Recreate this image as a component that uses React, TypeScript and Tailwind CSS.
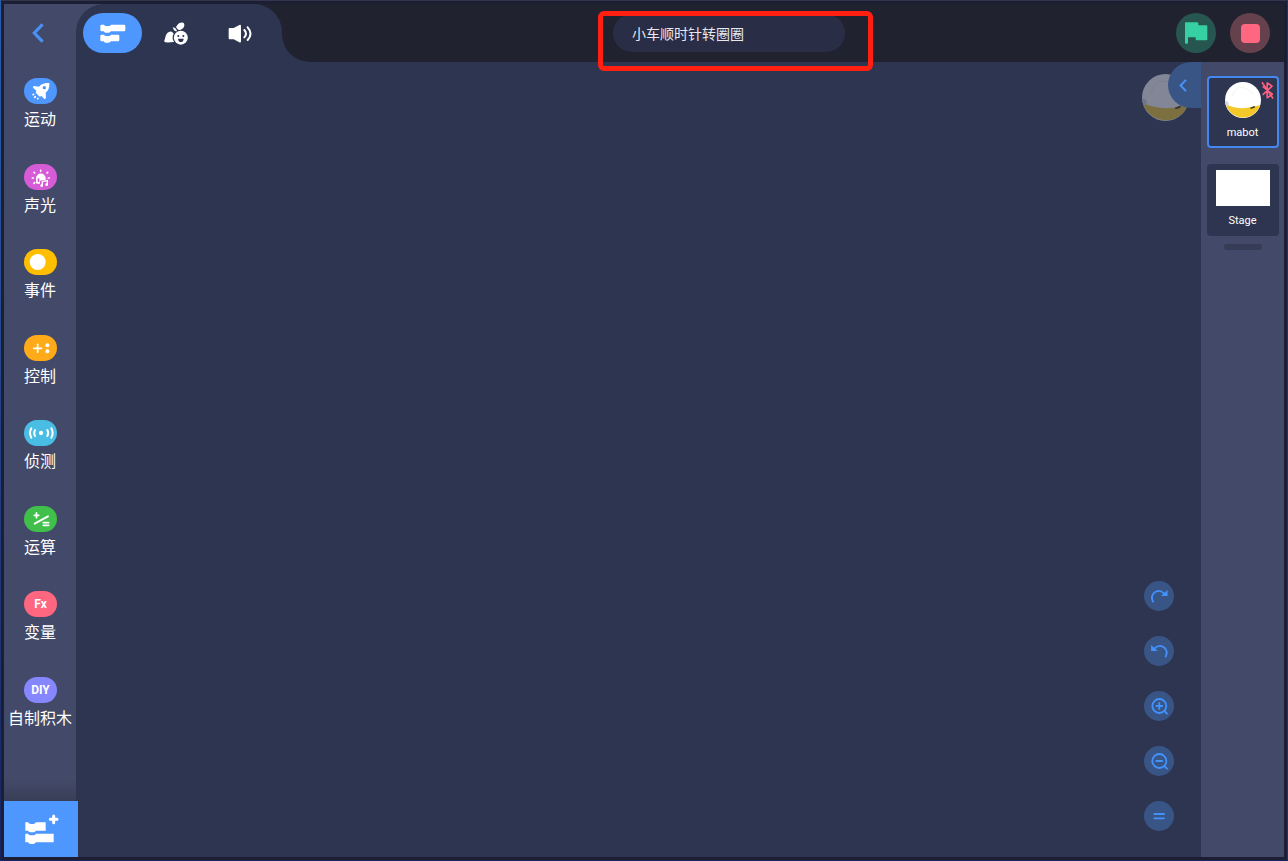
import React, { useState } from 'react';

type IconProps = { className?: string };

const BlocksIcon: React.FC<IconProps> = ({ className }) => (
  <svg viewBox="296 70 84 60" className={className} fill="currentColor">
    <path d="M304 75h7q2 4 6 4h9q4 0 6-4h39q4 0 4 4v12q0 4-4 4h-39q-3 4-7 4h-9q-4 0-6-4h-6q-4 0-4-4V79q0-4 4-4z" />
    <path d="M304 105h7q2 4 6 4h9q4 0 6-4h21q4 0 4 4v12q0 4-4 4h-21q-3 4-7 4h-9q-4 0-6-4h-6q-4 0-4-4v-12q0-4 4-4z" />
  </svg>
);

const CostumeIcon: React.FC<IconProps> = ({ className }) => (
  <svg viewBox="490 62 78 75" className={className}>
    <path d="M539 68q7-3 12-1q4 3 3 9q-1 6-8 11q-6 4-10 1q-6-4-7-8q4-8 10-12z" fill="#fff" />
    <path d="M521 82q7 0 10 10q-8 1-10-10z" fill="#fff" stroke="#fff" strokeWidth="2" strokeLinejoin="round" />
    <path d="M503 98q6-6 13-4q5 2 6 7q-5 7-3 14q1 6 5 9q-12 3-27 2q-5-1-3-6q2-3 3-9q1-8 6-13z" fill="#fff" />
    <circle cx="543.5" cy="112" r="21" fill="#fff" />
    <circle cx="536" cy="107" r="3" fill="#2e3450" />
    <circle cx="551" cy="107" r="3" fill="#2e3450" />
    <path d="M535 115h17q-1 10-8.500 10t-8.500-10z" fill="#2e3450" />
  </svg>
);

const SoundIcon: React.FC<IconProps> = ({ className }) => (
  <svg viewBox="684 70 75 57" className={className}>
    <path d="M689 82h12l17-9q5-2 5 3v46q0 5-5 3l-17-9h-12q-3 0-3-3V85q0-3 3-3z" fill="#fff" />
    <path d="M733 88q10 11 0 22M743 80q17 19 0 38" fill="none" stroke="#fff" strokeWidth="6" strokeLinecap="round" />
  </svg>
);

const AddBlockIcon: React.FC<IconProps> = ({ className }) => (
  <svg viewBox="72 96 108 96" className={className} fill="currentColor">
    <path d="M76 124h8q3 5 8 5h8q5 0 8-5h29v25h-29q-4 5-8 5h-8q-5 0-8-5h-8z" />
    <path d="M76 158h8q3 5 8 5h8q5 0 8-5h53v26h-53q-4 5-8 5h-8q-5 0-8-5h-8z" />
    <path d="M161 105v20M151 115h20" stroke="currentColor" strokeWidth="9" strokeLinecap="round" />
  </svg>
);

const ArrowLeft: React.FC<IconProps> = ({ className }) => (
  <svg viewBox="0 0 12 20" className={className} fill="none" stroke="#4a90f5" strokeWidth="3.200" strokeLinecap="square">
    <path d="M9.500 2.500L2.300 10l7.200 7.500" />
  </svg>
);

const Mabot: React.FC<IconProps> = ({ className }) => (
  <svg viewBox="0 0 46 46" className={className}>
    <circle cx="23" cy="23" r="23" fill="#fff" />
    <path d="M1 28.500Q21 38 45 29.500A23 23 0 0 1 1 28.500z" fill="#f3c929" />
    <path d="M9 18C11 10 17 6 22 7s12 4 15 10" fill="none" stroke="#f2efee" strokeWidth="1" />
    <path d="M0 24q4 0 5 4q-1 3-3 3q-2-3-2-7z" fill="#d6d8e0" />
    <path d="M32 33l6-2.500v2.500l-5 1.500z" fill="#4d3f14" />
  </svg>
);

const BluetoothOff: React.FC<IconProps> = ({ className }) => (
  <svg viewBox="422 241 40 57" className={className} fill="none" stroke="#ff5f7e" strokeWidth="5" strokeLinejoin="round">
    <path d="M427 283L456 256L441 246V292L457 281L427 257" />
    <path d="M425 244L459 294" strokeWidth="5" />
  </svg>
);

const RocketGlyph = () => (
  <>
    <path d="M73 15C58 14 49 18 42 26L27 24Q21 26 25 30L34 38L32 44L44 56L50 54L57 62Q62 65 63 58L62 44C71 36 74 28 73 15z" fill="#fff" />
    <circle cx="58" cy="29" r="5" fill="#4a94fc" />
    <path d="M24 50l2-1M38 62l1-1M29 58l2-2" stroke="#fff" strokeWidth="5" strokeLinecap="round" />
  </>
);

const LightGlyph = () => (
  <>
    <path d="M47 19v3M27 25l2 2M68 25l-2 2M22 42h3M70 42h3M29 56l-2 2" stroke="#fff" strokeWidth="5" strokeLinecap="round" />
    <path d="M33 56V43a14.500 14.500 0 0 1 29 0v4l-17 3v9H36q-3 0-3-3z" fill="#fff" />
    <path d="M38 43h5v11h-5z" fill="#d65bd6" />
    <path d="M52 64V53l15-3v12" fill="none" stroke="#fff" strokeWidth="4" />
    <circle cx="50" cy="65" r="4" fill="#fff" />
    <circle cx="65" cy="62" r="4" fill="#fff" />
  </>
);

const ControlGlyph = () => (
  <>
    <path d="M26 40h24M38 28v24" stroke="#fff" strokeWidth="5" strokeLinecap="round" />
    <circle cx="67" cy="31" r="6" fill="#fff" />
    <circle cx="67" cy="49" r="6" fill="#fff" />
  </>
);

const SensingGlyph = () => (
  <>
    <circle cx="48" cy="39" r="6.500" fill="#fff" />
    <path d="M30 30q-5 9 0 18M67 30q5 9 0 18M19 25q-8 14 0 28M79 25q8 14 0 28" fill="none" stroke="#fff" strokeWidth="6" strokeLinecap="round" />
  </>
);

const OperatorGlyph = () => (
  <path d="M28 28h13M34.500 21v14M29 53L69 31M55 50h16M55 58h16" stroke="#fff" strokeWidth="5.500" strokeLinecap="round" />
);

const categories = [
  { label: '运动', color: 'bg-[#4d97ff]', glyph: <RocketGlyph /> },
  { label: '声光', color: 'bg-[#d65bd6]', glyph: <LightGlyph /> },
  { label: '事件', color: 'bg-[#ffbf00]', glyph: <circle cx="38" cy="39" r="24" fill="#fff" /> },
  { label: '控制', color: 'bg-[#ffab19]', glyph: <ControlGlyph /> },
  { label: '侦测', color: 'bg-[#4abde4]', glyph: <SensingGlyph /> },
  { label: '运算', color: 'bg-[#40bf4a]', glyph: <OperatorGlyph /> },
  { label: '变量', color: 'bg-[#ff667f]', text: 'Fx' },
  { label: '自制积木', color: 'bg-[#8686ff]', text: 'DIY' },
];

const tools = [
  {
    name: 'Redo',
    glyph: (
      <>
        <path d="M27 62Q19 46 31 35Q45 23 61 38" />
        <path d="M68 33V42H58z" fill="currentColor" />
      </>
    ),
  },
  {
    name: 'Undo',
    glyph: (
      <>
        <path d="M65 62Q73 46 61 35Q47 23 31 38" />
        <path d="M24 33V42H34z" fill="currentColor" />
      </>
    ),
  },
  {
    name: 'Zoom in',
    glyph: (
      <>
        <circle cx="46" cy="45" r="21" />
        <path d="M37 45h18M46 36v18M61 60l8 8" />
      </>
    ),
  },
  {
    name: 'Zoom out',
    glyph: (
      <>
        <circle cx="46" cy="45" r="21" />
        <path d="M37 45h18M61 60l8 8" />
      </>
    ),
  },
  { name: 'Reset zoom', glyph: <path d="M31 39h29M31 52h29" /> },
];

const App: React.FC = () => {
  const [title, setTitle] = useState('小车顺时针转圈圈');

  return (
    <div className="flex min-h-screen bg-linear-to-b from-[#2a5fae] to-[#182560] pl-px pb-px font-['Roboto','Noto_Sans_CJK_SC',sans-serif] text-white">
      <div className="flex flex-1 flex-col border-t border-r border-t-[#32354b] border-r-[#263061] bg-[#1c1f33] p-[3px]">
        {/* Header */}
        <header className="flex h-[58px] items-center bg-[#20222f]">
          <div className="flex h-full bg-linear-to-r from-[#434a69] from-50% to-[#20222f] to-50%">
            <button aria-label="Back" className="flex w-[72px] items-center justify-center bg-[#434a69] pr-1">
              <ArrowLeft className="h-5 w-3" />
            </button>
            <nav className="relative flex w-[206px] items-center rounded-t-[28px] bg-[#2e3550] pl-[7px]">
              <button aria-label="Blocks" className="flex h-10 w-[59px] items-center justify-center rounded-full bg-[#4d97ff]">
                <BlocksIcon className="h-5 w-7" />
              </button>
              <button aria-label="Costumes" className="flex h-10 w-[68px] items-center justify-center">
                <CostumeIcon className="h-[25px] w-[26px]" />
              </button>
              <button aria-label="Sounds" className="flex h-10 w-[60px] items-center justify-center">
                <SoundIcon className="h-[19px] w-[25px]" />
              </button>
              <span className="absolute bottom-0 left-full size-7 bg-[#2e3550]">
                <span className="block size-7 rounded-bl-[28px] bg-[#20222f]" />
              </span>
            </nav>
          </div>

          <div className="flex flex-1 justify-center">
            <div className="relative">
              <input
                aria-label="Project name"
                value={title}
                onChange={(e) => setTitle(e.target.value)}
                className="block h-[38px] w-[232px] rounded-full bg-[#292d45] px-[19px] text-sm text-[#e8e9ee] outline-none"
              />
              <div className="pointer-events-none absolute -top-[3px] -right-7 -bottom-[19px] -left-[15px] z-10 rounded-md border-[5px] border-[#ff2012]" />
            </div>
          </div>

          <div className="flex gap-[14px] pr-[14px]">
            <button aria-label="Start" className="flex size-10 items-center justify-center rounded-full bg-[#27554f]">
              <svg viewBox="192 63 72 70" className="h-6 w-6" fill="#36d1a3">
                <path d="M197 66h35q3 0 3 3v6h24q3 0 3 3v39q0 3-3 3h-28q-4 0-4-4v-5h-23v16q0 3-3 3h-3q-3 0-3-3V69q0-3 2-3z" />
              </svg>
            </button>
            <button aria-label="Stop" className="flex size-10 items-center justify-center rounded-full bg-[#65414d]">
              <span className="size-[19px] rounded bg-[#ff667f]" />
            </button>
          </div>
        </header>

        <div className="flex flex-1">
          {/* Categories */}
          <aside className="flex w-[72px] flex-col bg-[#434a69]">
            <nav className="grid flex-1 auto-rows-fr bg-linear-to-t from-[#393e57] to-[#434a69] to-3% pt-4 pb-[39px]">
              {categories.map((cat) => (
                <button key={cat.label} className="flex flex-col items-center gap-1 whitespace-nowrap">
                  <span className={`ml-px flex h-[26px] w-[33px] items-center justify-center rounded-full text-xs font-bold ${cat.color}`}>
                    {cat.text ?? (
                      <svg viewBox="0 0 96 78" className="h-[26px] w-8">
                        {cat.glyph}
                      </svg>
                    )}
                  </span>
                  <span className="text-base leading-6">{cat.label}</span>
                </button>
              ))}
            </nav>
            <button aria-label="Add extension" className="relative flex h-14 w-[74px] items-center justify-center bg-[#4d97ff] pl-px">
              <AddBlockIcon className="h-8 w-9" />
            </button>
          </aside>

          {/* Workspace */}
          <main className="flex flex-1 flex-col items-end justify-between bg-[#2e3550]">
            <div className="relative">
              <Mabot className="absolute top-3 right-3 size-[47px] opacity-40" />
              <button aria-label="Show stage" className="relative flex h-[46px] w-[33px] items-center justify-center rounded-l-full bg-[#395586] pr-[3px]">
                <ArrowLeft className="h-[13px] w-2" />
              </button>
            </div>
            <div className="flex flex-col gap-[25px] pr-[27px] pb-[26px]">
              {tools.map((tool) => (
                <button key={tool.name} aria-label={tool.name} className="size-[30px] rounded-full bg-[#395586] text-[#4392fc]">
                  <svg viewBox="0 0 90 90" className="size-[30px]" fill="none" stroke="currentColor" strokeWidth="5.500" strokeLinecap="round">
                    {tool.glyph}
                  </svg>
                </button>
              ))}
            </div>
          </main>

          {/* Sprites */}
          <aside className="flex w-[83px] flex-col items-center bg-[#434a69] pt-[14px]">
            <button className="relative flex size-[72px] flex-col items-center rounded border-2 border-[#4288ee] bg-[#2e3550] pt-1 text-[11px] leading-4">
              <Mabot className="size-9" />
              <span className="mt-[7px]">mabot</span>
              <BluetoothOff className="absolute top-[3px] right-[3px] h-[19px] w-[13px]" />
            </button>
            <button className="mt-4 flex size-[72px] flex-col items-center rounded bg-[#2e3550] pt-[6px] text-[11px] leading-4">
              <span className="h-9 w-[54px] bg-white" />
              <span className="mt-[7px]">Stage</span>
            </button>
            <span className="mt-2 h-[6px] w-[38px] rounded-full bg-[#363b56]" />
          </aside>
        </div>
      </div>
    </div>
  );
};

export default App;
